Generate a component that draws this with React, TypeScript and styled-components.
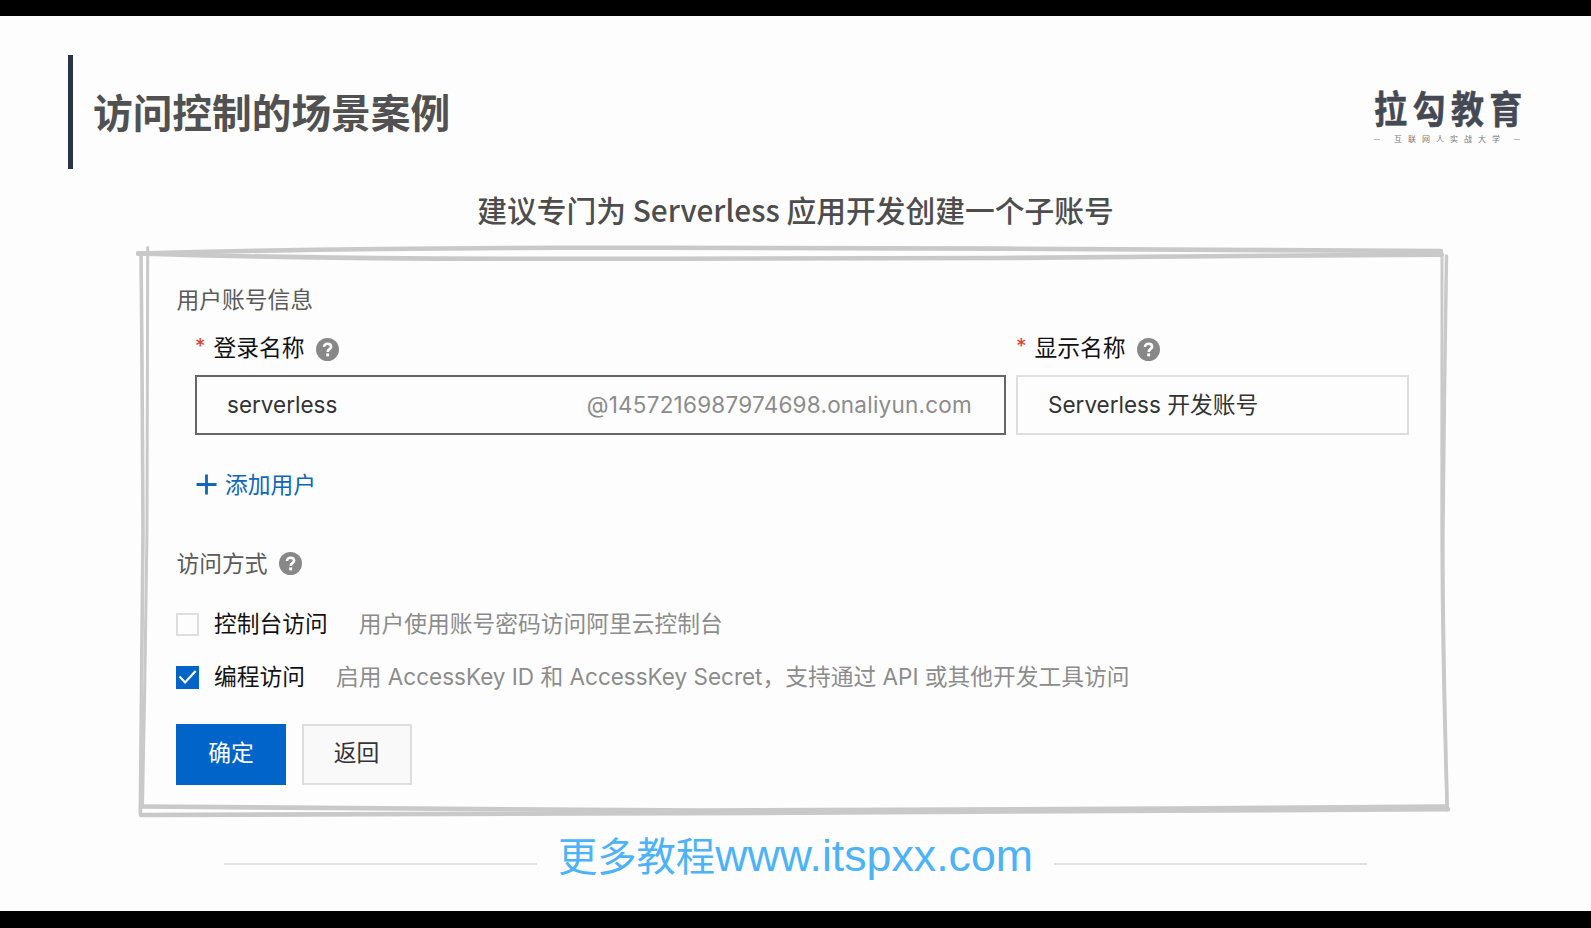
import React from 'react';
import styled, { createGlobalStyle } from 'styled-components';

const GlobalStyle = createGlobalStyle`
  * { box-sizing: border-box; }
  body {
    margin: 0;
    background: #000;
    font-family: "Noto Sans CJK SC", sans-serif;
  }
`;

const Screen = styled.div`
  width: 1591px;
  height: 928px;
  padding: 16px 0 17px;
  background: #000;
  overflow: hidden;
`;

const Slide = styled.main`
  display: flex;
  flex-direction: column;
  height: 895px;
  background: #fdfdfd;
`;

const Header = styled.header`
  display: flex;
  justify-content: space-between;
  height: 114px;
  margin: 39px 71px 0 68px;
`;

const TitleBlock = styled.div`
  display: flex;
  align-items: center;
  border-left: 5px solid #27344a;
  padding: 0 0 3px 20px;
`;

const Title = styled.h1`
  margin: 0;
  font-size: 39.7px;
  line-height: 48px;
  font-weight: 700;
  color: #515151;
  white-space: nowrap;
`;

const Logo = styled.div`
  display: flex;
  flex-direction: column;
  width: 146px;
  padding-top: 32px;
`;

const LogoName = styled.div`
  width: 170px;
  font-size: 37.5px;
  line-height: 40px;
  font-weight: 700;
  letter-spacing: 6.2px;
  color: #444954;
  -webkit-text-stroke: 0.5px #444954;
  white-space: nowrap;
  transform: scaleX(0.88);
  transform-origin: 0 0;
`;

const LogoTagline = styled.div`
  display: flex;
  align-items: center;
  justify-content: space-between;
  height: 12px;
  margin-top: 6px;
  font-size: 8px;
  line-height: 12px;
  color: #777;
  white-space: nowrap;

  span {
    letter-spacing: 6px;
    margin-right: -6px;
  }
  &::before,
  &::after {
    content: '';
    width: 6px;
    height: 1px;
    background: #bbb;
  }
`;

const Subtitle = styled.h2`
  margin: 16px 0 0;
  font-size: 29.75px;
  line-height: 48px;
  font-weight: 500;
  color: #4d4d4d;
  text-align: center;
  white-space: nowrap;
`;

const Panel = styled.section`
  position: relative;
  width: 1318px;
  height: 574px;
  margin: 12px 0 0 136px;
  padding: 38px 0 0 40px;
  font-size: 22.75px;
  line-height: 32px;
`;

const SketchFrame = styled.svg`
  position: absolute;
  inset: 0;
  fill: none;
  stroke: #c9c9c9;
  stroke-width: 4.6px;
  stroke-linecap: round;
  pointer-events: none;
`;

const SectionTitle = styled.div<{ $top?: number }>`
  display: flex;
  align-items: center;
  gap: 11px;
  height: 32px;
  margin-top: ${(p) => p.$top ?? 0}px;
  padding-left: 0.5px;
  color: #5a5a5a;
`;

const Fields = styled.div`
  display: flex;
  gap: 10px;
  margin: 16px 0 0 19px;
`;

const Field = styled.div<{ $width: number }>`
  width: ${(p) => p.$width}px;
`;

const FieldLabel = styled.label`
  display: flex;
  align-items: center;
  height: 32px;
  color: #111;

  svg { margin: 4px 0 0 11px; }
`;

const Required = styled.span`
  width: 18.5px;
  font-family: Inter, sans-serif;
  font-size: 21px;
  color: #d93f2f;
`;

const InputBox = styled.div<{ $active?: boolean }>`
  display: flex;
  align-items: center;
  justify-content: space-between;
  height: 60px;
  margin-top: 12px;
  padding: 0 32px 0 30px;
  border: 2px solid ${(p) => (p.$active ? '#666' : '#dedede')};
  color: #333;
  white-space: nowrap;
`;

const InputValue = styled.span`
  padding-bottom: 2px;
`;

const Latin = styled.span<{ $muted?: boolean; $spacing?: number }>`
  font-family: Inter, sans-serif;
  font-size: 22.5px;
  line-height: 1;
  letter-spacing: ${(p) => p.$spacing ?? 0}px;
  color: ${(p) => (p.$muted ? '#8c8c8c' : 'inherit')};
`;

const AddLink = styled.a`
  display: flex;
  align-items: center;
  gap: 8px;
  height: 32px;
  margin: 33px 0 0 20px;
  color: #0f66bd;
`;

const Option = styled.div<{ $top: number }>`
  display: flex;
  align-items: center;
  height: 24px;
  margin-top: ${(p) => p.$top}px;
  white-space: nowrap;
`;

const Checkbox = styled.span<{ $checked?: boolean }>`
  display: flex;
  align-items: center;
  justify-content: center;
  width: 23px;
  height: 23px;
  margin-right: 15px;
  border: ${(p) => (p.$checked ? 'none' : '2px solid #dedede')};
  background: ${(p) => (p.$checked ? '#0064c8' : 'transparent')};
`;

const OptionName = styled.span`
  padding-bottom: 2px;
  color: #111;
`;

const OptionHint = styled.span`
  margin-left: 31px;
  padding-bottom: 2px;
  color: #8c8c8c;
`;

const Actions = styled.div`
  display: flex;
  gap: 15.5px;
  margin-top: 35px;
`;

const Button = styled.button<{ $primary?: boolean }>`
  width: 110px;
  height: 61px;
  padding: 0 0 5px;
  border: ${(p) => (p.$primary ? 'none' : '2px solid #dedede')};
  background: ${(p) => (p.$primary ? '#0064c8' : '#f9f9f9')};
  color: ${(p) => (p.$primary ? '#fff' : '#333')};
  font: inherit;
`;

const Footer = styled.footer`
  display: flex;
  align-items: center;
  height: 56px;
  margin: 17px 224px 0;
`;

const Rule = styled.div`
  flex: 0 0 313px;
  height: 2px;
  background: #e3e3e3;
`;

const SiteName = styled.div`
  flex: 1;
  display: flex;
  align-items: baseline;
  justify-content: center;
  padding-bottom: 20px;
  font-size: 39.3px;
  line-height: 56px;
  color: #4db3f8;
  white-space: nowrap;

  b {
    font: 400 44.7px/1 "Liberation Sans", sans-serif;
  }
`;

const Help = () => (
  <svg width="23" height="23" viewBox="0 0 23 23" fill="none">
    <circle cx="11.5" cy="11.5" r="11.5" fill="#888" />
    <path
      d="M8 9.1C8 6.9 9.4 5.8 11.5 5.8S15.1 7 15.1 8.8c0 2.2-3.4 2.4-3.4 5.1"
      stroke="#fff"
      strokeWidth="2.6"
    />
    <rect x="10.2" y="15.4" width="2.9" height="2.9" fill="#fff" />
  </svg>
);

const Plus = () => (
  <svg width="21" height="21" viewBox="0 0 21 21" stroke="#0f66bd" strokeWidth="2.8">
    <path d="M0.5 10.5h20M10.5 0.5v20" />
  </svg>
);

const Check = () => (
  <svg width="23" height="23" viewBox="0 0 23 23" fill="none" stroke="#fff" strokeWidth="2.2">
    <path d="M3.5 10.5l5.6 6L19.6 5" />
  </svg>
);

export default function App() {
  return (
    <Screen>
      <GlobalStyle />
      <Slide>
        <Header>
          <TitleBlock>
            <Title>访问控制的场景案例</Title>
          </TitleBlock>
          <Logo>
            <LogoName>拉勾教育</LogoName>
            <LogoTagline>
              <span>互联网人实战大学</span>
            </LogoTagline>
          </Logo>
        </Header>

        <Subtitle>建议专门为 Serverless 应用开发创建一个子账号</Subtitle>

        <Panel>
          <SketchFrame width="1318" height="574" viewBox="136 245 1318 574">
            <path d="M138 253.5C250 250.5 400 248 560 247.8S900 248 1000 248.6S1300 250.3 1441 251" />
            <path d="M138 253.5C220 256 330 258.8 500 258.8S900 258.8 1000 258S1300 255.4 1442 254.6" />
            <path d="M141 253C142 350 143 480 143 530S141.5 700 140.3 814" strokeWidth="3.6" />
            <path d="M147.7 247.5C147.8 350 147.5 450 147 530S144 720 142.5 806" strokeWidth="3" />
            <path d="M141 806.5C300 808 500 810.2 700 810.6S1200 808.5 1446 806.5" />
            <path d="M141 815C400 815.4 600 814.6 800 812.7S1200 810 1448 809.2" />
            <path d="M1446.5 256C1445.5 330 1443.5 450 1443 530S1444.5 700 1447.3 806" strokeWidth="3.4" />
            <path d="M1442 256C1441.6 380 1441.6 460 1441.8 530S1444 720 1447 810" strokeWidth="3" />
          </SketchFrame>

          <SectionTitle>用户账号信息</SectionTitle>
          <Fields>
            <Field $width={811}>
              <FieldLabel>
                <Required>*</Required>登录名称
                <Help />
              </FieldLabel>
              <InputBox $active>
                <Latin>serverless</Latin>
                <Latin $muted $spacing={0.23}>@1457216987974698.onaliyun.com</Latin>
              </InputBox>
            </Field>
            <Field $width={393}>
              <FieldLabel>
                <Required>*</Required>显示名称
                <Help />
              </FieldLabel>
              <InputBox>
                <InputValue>
                  <Latin>Serverless </Latin>开发账号
                </InputValue>
              </InputBox>
            </Field>
          </Fields>
          <AddLink>
            <Plus />
            添加用户
          </AddLink>

          <SectionTitle $top={47}>
            访问方式
            <Help />
          </SectionTitle>
          <Option $top={33}>
            <Checkbox />
            <OptionName>控制台访问</OptionName>
            <OptionHint>用户使用账号密码访问阿里云控制台</OptionHint>
          </Option>
          <Option $top={29}>
            <Checkbox $checked>
              <Check />
            </Checkbox>
            <OptionName>编程访问</OptionName>
            <OptionHint>
              启用<Latin> AccessKey ID </Latin>和<Latin> AccessKey Secret</Latin>，支持通过
              <Latin> API </Latin>或其他开发工具访问
            </OptionHint>
          </Option>
          <Actions>
            <Button $primary>确定</Button>
            <Button>返回</Button>
          </Actions>
        </Panel>

        <Footer>
          <Rule />
          <SiteName>
            更多教程<b>www.itspxx.com</b>
          </SiteName>
          <Rule />
        </Footer>
      </Slide>
    </Screen>
  );
}
